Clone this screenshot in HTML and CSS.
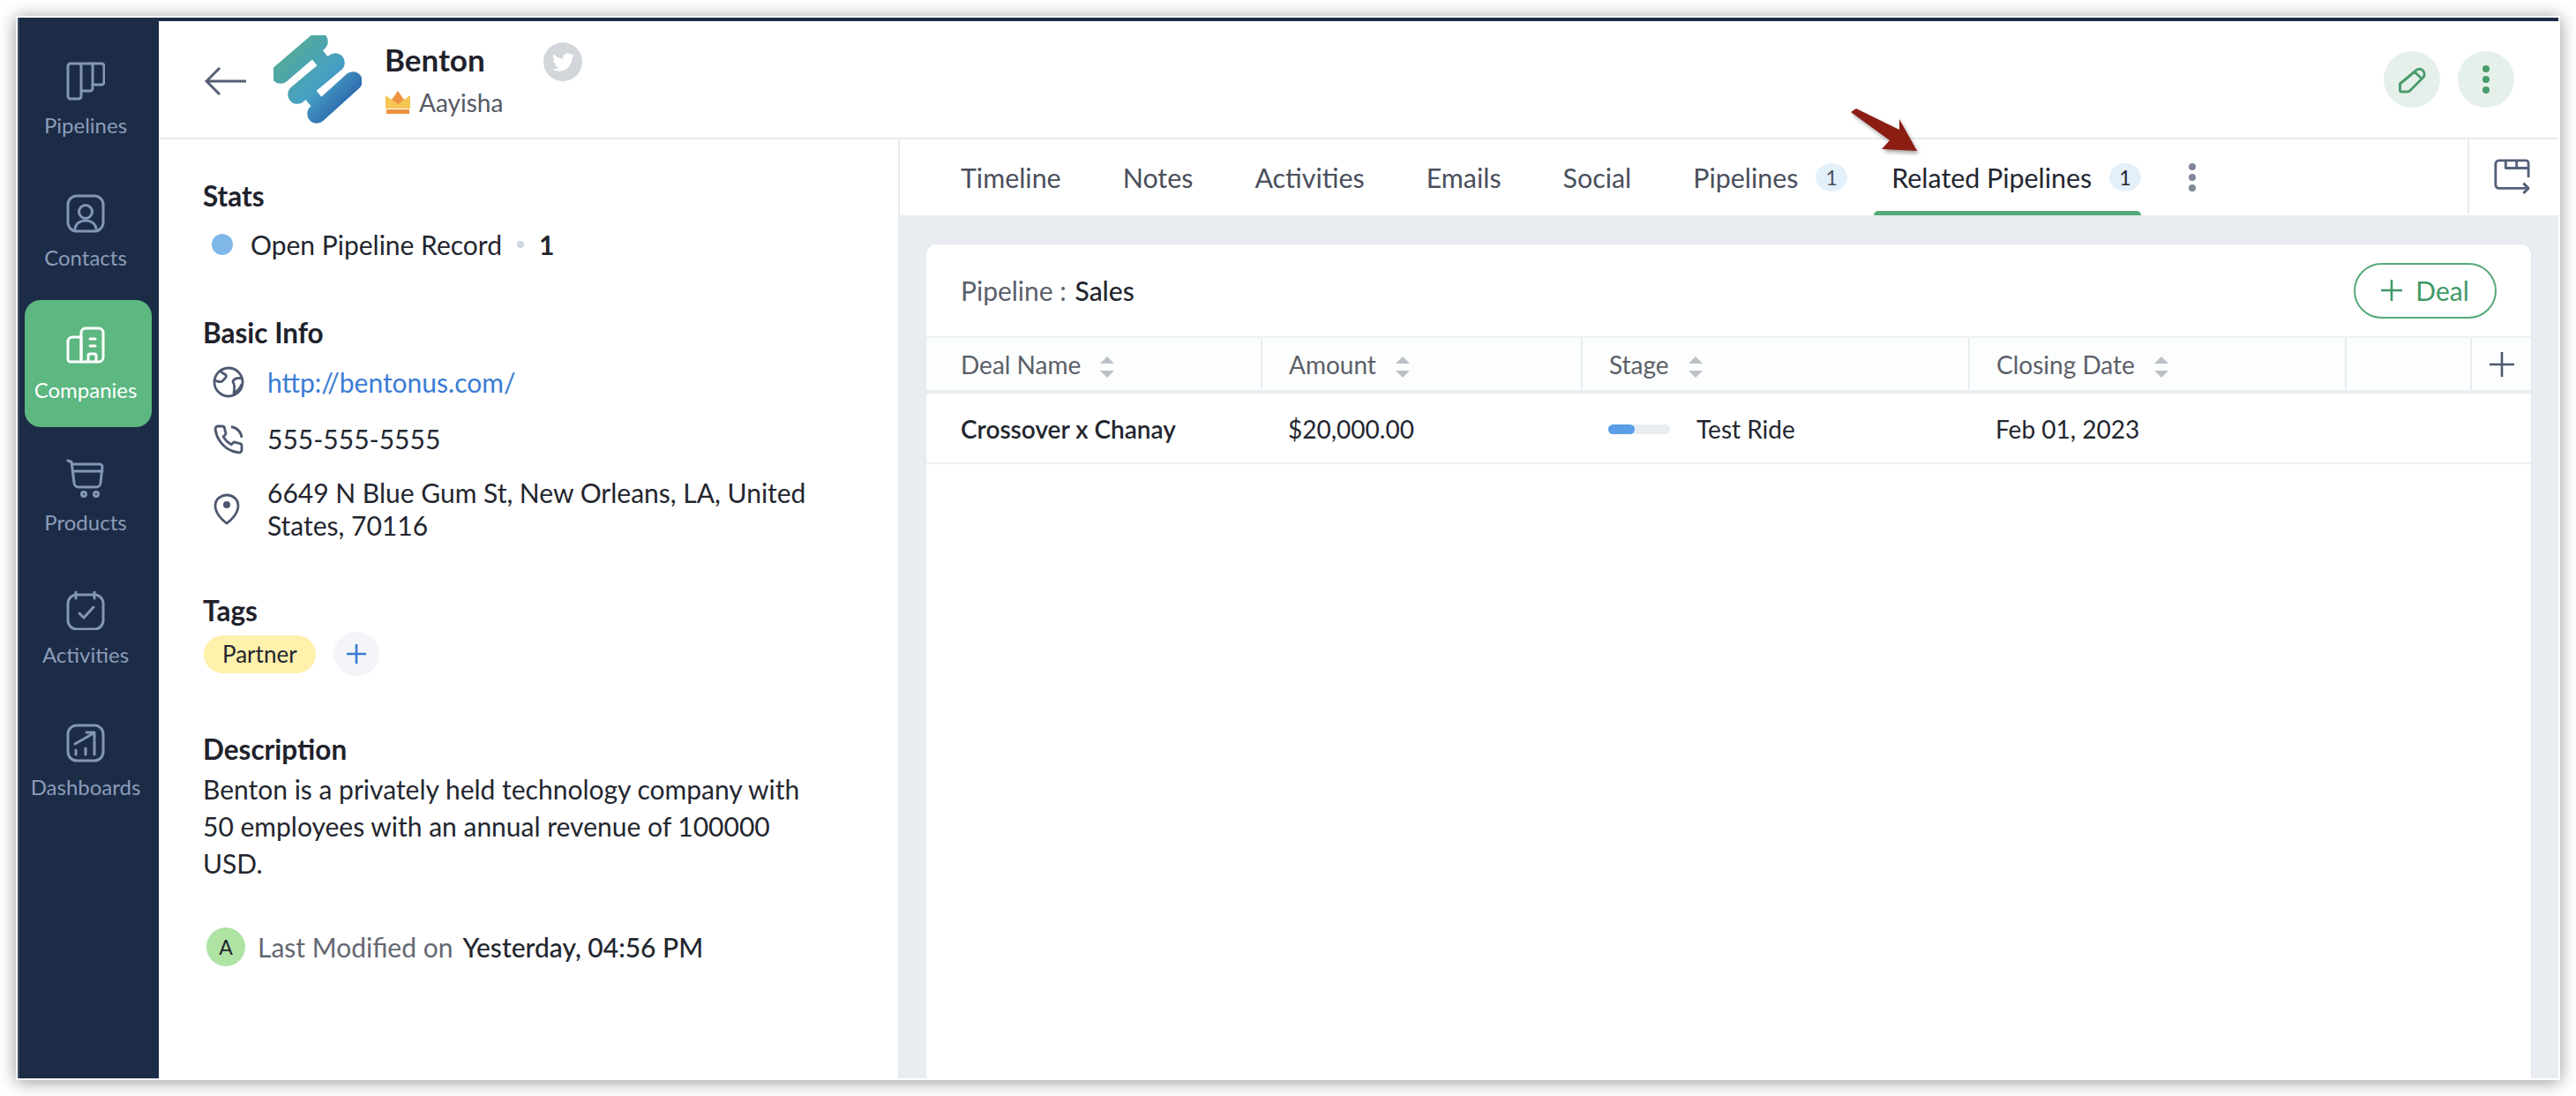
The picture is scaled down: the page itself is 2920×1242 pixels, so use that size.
FILE: index.html
```html
<!DOCTYPE html>
<html lang="en">
<head>
    <meta charset="UTF-8">
    <title>Benton</title>
    <link rel="stylesheet" href="styles.css">
</head>
<body>
    <div class="frame">
        <nav class="sidebar">
            <a class="nav-item">
                <svg class="nav-icon" viewBox="0 0 44 44"><rect x="2" y="2" width="15" height="40" rx="3"/><path d="M17 2h13v28a3 3 0 0 1-3 3H17"/><path d="M30 2h10a3 3 0 0 1 3 3v18a3 3 0 0 1-3 3H30"/></svg>
                <span>Pipelines</span>
            </a>
            <a class="nav-item">
                <svg class="nav-icon" viewBox="0 0 44 44"><rect x="2" y="2" width="40" height="40" rx="10"/><circle cx="22" cy="20" r="7.5"/><path d="M10 39c1-6 6-9 12-9s11 3 12 9"/></svg>
                <span>Contacts</span>
            </a>
            <a class="nav-item active">
                <svg class="nav-icon" viewBox="0 0 44 44"><path d="M17 12v28H5a3 3 0 0 1-3-3V17a5 5 0 0 1 5-5z"/><path d="M17 40V7a5 5 0 0 1 5-5h15a5 5 0 0 1 5 5v28a5 5 0 0 1-5 5z"/><path d="M27 14h6M27 22h6"/><path d="M25 40v-7a2 2 0 0 1 2-2h5a2 2 0 0 1 2 2v7"/></svg>
                <span>Companies</span>
            </a>
            <a class="nav-item">
                <svg class="nav-icon" viewBox="0 0 44 44"><path d="M2 2l4 1.5L9 27a5 5 0 0 0 5 5h20a5 5 0 0 0 5-5l2-18a3 3 0 0 0-3-3H7"/><path d="M9 14h32"/><circle cx="20" cy="40" r="2.5"/><circle cx="34" cy="40" r="2.5"/></svg>
                <span>Products</span>
            </a>
            <a class="nav-item">
                <svg class="nav-icon" viewBox="0 0 44 44"><rect x="2" y="4" width="40" height="39" rx="10"/><path d="M11 0v8M32 0v8"/><path d="M15 25l5 5 11-12"/></svg>
                <span>Activities</span>
            </a>
            <a class="nav-item">
                <svg class="nav-icon" viewBox="0 0 44 44"><rect x="2" y="2" width="40" height="40" rx="10"/><path d="M10 23l21-12M23 10h9v8"/><path d="M11 30v5M22 28v7M32 20v15"/></svg>
                <span>Dashboards</span>
            </a>
        </nav>

        <div class="page">
            <header class="topbar">
                <svg class="back-icon" viewBox="0 0 48 32"><path d="M47 16H2M17 1L2 16l15 15"/></svg>
                <svg class="logo" viewBox="10 10 100 100">
                    <defs>
                        <linearGradient id="logoGrad" gradientUnits="userSpaceOnUse" x1="25" y1="30" x2="100" y2="100">
                            <stop offset="0" stop-color="#52a99b"/>
                            <stop offset="0.5" stop-color="#47a0c4"/>
                            <stop offset="1" stop-color="#2457a6"/>
                        </linearGradient>
                    </defs>
                    <g fill="none" stroke="url(#logoGrad)" stroke-linecap="round">
                        <path stroke-width="21.5" d="M61 17L18 54M80 41L37 77M100 62L59 99"/>
                        <path stroke-width="16" stroke-linecap="butt" d="M53 24l19 23M46 70l19 23"/>
                    </g>
                </svg>
                <div class="title-block">
                    <div class="company-name">Benton</div>
                    <div class="owner">
                        <svg class="crown" viewBox="0 0 28 26"><path fill="#f5c653" d="M0 5l7 5 7-6 7 6 7-5v15H0z"/><path fill="#ee9240" d="M14 0l7 10-7 5-7-5zM1 21h26v5H1z"/></svg>
                        <span>Aayisha</span>
                    </div>
                </div>
                <span class="twitter-badge">
                    <svg viewBox="0 0 24 24"><path fill="#fff" d="M23.953 4.57a10 10 0 01-2.825.775 4.958 4.958 0 002.163-2.723c-.951.555-2.005.959-3.127 1.184a4.92 4.92 0 00-8.384 4.482C7.69 8.095 4.067 6.13 1.64 3.162a4.822 4.822 0 00-.666 2.475c0 1.71.87 3.213 2.188 4.096a4.904 4.904 0 01-2.228-.616v.06a4.923 4.923 0 003.946 4.827 4.996 4.996 0 01-2.212.085 4.936 4.936 0 004.604 3.417 9.867 9.867 0 01-6.102 2.105c-.39 0-.779-.023-1.17-.067a13.995 13.995 0 007.557 2.209c9.053 0 13.998-7.496 13.998-13.985 0-.21 0-.42-.015-.63A9.935 9.935 0 0024 4.59z"/></svg>
                </span>
                <div class="top-actions">
                    <button class="round-btn">
                        <svg class="pencil" viewBox="0 0 32 32"><path d="M2.500 21v7q0 2 2 2H11q1.500 0 2.500-1L28.500 14a5.600 5.600 0 0 0-8-8z"/><path d="M19 7.500l8.500 8"/></svg>
                    </button>
                    <button class="round-btn">
                        <svg class="kebab-green" viewBox="0 0 8 32"><circle cx="4" cy="4" r="4"/><circle cx="4" cy="16" r="4"/><circle cx="4" cy="28" r="4"/></svg>
                    </button>
                </div>
            </header>

            <div class="content">
                <aside class="details">
                    <h3>Stats</h3>
                    <div class="stat-row">
                        <span class="stat-dot"></span>
                        <span>Open Pipeline Record</span>
                        <span class="sep-dot"></span>
                        <b>1</b>
                    </div>

                    <h3 class="basic-head">Basic Info</h3>
                    <div class="info-row first">
                        <svg class="info-icon" viewBox="0 0 36 36"><circle cx="18" cy="18" r="16"/><path d="M9 5c2 4 4 3 6 5 2 3-2 4-4 7-2 2-5 0-9-1"/><path d="M33 14c-5-2-10 1-10 4 2 2 2 7 1 13 4-3 8-7 9-11"/></svg>
                        <a class="link">http://bentonus.com/</a>
                    </div>
                    <div class="info-row phone">
                        <svg class="info-icon" viewBox="0 0 24 24"><path class="thin" d="M22 16.900v3a2 2 0 0 1-2.200 2 19.800 19.800 0 0 1-8.600-3 19.500 19.500 0 0 1-6-6 19.800 19.800 0 0 1-3.100-8.700A2 2 0 0 1 4.100 2h3a2 2 0 0 1 2 1.700c.1 1 .4 1.900.7 2.800a2 2 0 0 1-.4 2.100L8.100 9.900a16 16 0 0 0 6 6l1.300-1.300a2 2 0 0 1 2.100-.4c.9.3 1.800.6 2.800.7a2 2 0 0 1 1.700 2z"/><path class="thin" d="M14 2.500a9 9 0 0 1 8 8"/></svg>
                        <span>555-555-5555</span>
                    </div>
                    <div class="info-row">
                        <svg class="info-icon" viewBox="0 0 36 36"><path d="M16 2C9 2 3 7 3 14c0 8 7 16 13 20 6-4 13-12 13-20 0-7-6-12-13-12z"/><circle class="fill" cx="16" cy="13" r="4"/></svg>
                        <span class="address">6649 N Blue Gum St, New Orleans, LA, United States, 70116</span>
                    </div>

                    <h3 class="tags-head">Tags</h3>
                    <div class="tag-row">
                        <span class="tag">Partner</span>
                        <button class="tag-add"><svg viewBox="0 0 24 24"><path d="M12 1v22M1 12h22"/></svg></button>
                    </div>

                    <h3 class="desc-head">Description</h3>
                    <p class="description">Benton is a privately held technology company with 50 employees with an annual revenue of 100000 USD.</p>

                    <div class="modified">
                        <span class="avatar">A</span>
                        <span class="modified-label">Last Modified on</span>
                        <span class="modified-value">Yesterday, 04:56 PM</span>
                    </div>
                </aside>

                <main class="main">
                    <div class="tabs">
                        <a class="tab">Timeline</a>
                        <a class="tab">Notes</a>
                        <a class="tab">Activities</a>
                        <a class="tab">Emails</a>
                        <a class="tab">Social</a>
                        <a class="tab counted">Pipelines <span class="count">1</span></a>
                        <a class="tab counted active">Related Pipelines <span class="count">1</span></a>
                        <svg class="kebab" viewBox="0 0 8 32"><circle cx="4" cy="4" r="4"/><circle cx="4" cy="16" r="4"/><circle cx="4" cy="28" r="4"/></svg>
                        <div class="tab-tool">
                            <svg viewBox="0 0 44 44"><path d="M42 23V6a3 3 0 0 0-3-3H7a4 4 0 0 0-4 4v25a4 4 0 0 0 4 4h34"/><path d="M15 3v9h27M28 3v9"/><path d="M36 30l6 6-6 6"/></svg>
                        </div>
                    </div>

                    <div class="panel">
                        <div class="card">
                            <div class="card-head">
                                <div class="pipeline-name">Pipeline : <b>Sales</b></div>
                                <button class="add-deal"><svg viewBox="0 0 24 24"><path d="M12 0v24M0 12h24"/></svg>Deal</button>
                            </div>
                            <div class="grid grid-head">
                                <div class="th">Deal Name <svg class="sort" viewBox="0 0 16 24"><path d="M8 0l8 8H0zM0 16h16l-8 8z"/></svg></div>
                                <div class="th">Amount <svg class="sort" viewBox="0 0 16 24"><path d="M8 0l8 8H0zM0 16h16l-8 8z"/></svg></div>
                                <div class="th">Stage <svg class="sort" viewBox="0 0 16 24"><path d="M8 0l8 8H0zM0 16h16l-8 8z"/></svg></div>
                                <div class="th">Closing Date <svg class="sort" viewBox="0 0 16 24"><path d="M8 0l8 8H0zM0 16h16l-8 8z"/></svg></div>
                                <div class="th"></div>
                                <div class="th th-add"><svg viewBox="0 0 28 28"><path d="M14 0v28M0 14h28"/></svg></div>
                            </div>
                            <div class="grid grid-row">
                                <div class="td deal-name">Crossover x Chanay</div>
                                <div class="td">$20,000.00</div>
                                <div class="td stage">
                                    <span class="stage-bar"><span class="stage-fill"></span></span>
                                    Test Ride
                                </div>
                                <div class="td">Feb 01, 2023</div>
                            </div>
                        </div>
                    </div>
                </main>
            </div>
        </div>

        <!-- red pointer drawn over the tab bar -->
        <svg class="pointer" viewBox="0 0 100 70"><path d="M8 9l6-4 49 24V17l20 36-40-2 9-10z"/></svg>
    </div>
</body>
</html>
```

FILE: styles.css
```css
* {
    box-sizing: border-box;
}
html, body {
    margin: 0;
    height: 100%;
    background-color: #ffffff;
}
body {
    padding: 18px;
    font-family: "Lato", "Liberation Sans", sans-serif;
    font-size: 30px;
    color: #23262f;
    overflow: hidden;
}
button {
    font-family: inherit;
    border: none;
    padding: 0;
    cursor: pointer;
}
.frame {
    position: relative;
    display: flex;
    width: 2884px;
    height: 1206px;
    border: 2px solid #ffffff;
    background-color: #ffffff;
    box-shadow: 0 2px 18px rgba(0, 0, 0, 0.42);
}

/* left navigation */
.sidebar {
    flex: 0 0 160px;
    display: flex;
    flex-direction: column;
    gap: 6px;
    padding: 20px 8px 0 8px;
    background-color: #1c2c47;
    border-left: 2px solid #3c4a64;
}
.nav-item {
    display: flex;
    flex-direction: column;
    align-items: center;
    height: 144px;
    padding: 30px 6px 0 0;
    margin-left: -2px;
    border-radius: 18px;
    font-size: 24px;
    line-height: 30px;
    color: #8c9cb9;
}
.nav-icon {
    width: 44px;
    height: 44px;
    margin-bottom: 13px;
    fill: none;
    stroke: #8496b6;
    stroke-width: 3;
    stroke-linecap: round;
    stroke-linejoin: round;
}
.nav-item.active {
    background-color: #5cb781;
    color: #ffffff;
}
.nav-item.active .nav-icon {
    stroke: #ffffff;
}

.page {
    flex: 1;
    min-width: 0;
    display: flex;
    flex-direction: column;
    border-top: 4px solid #1c2c47;
}

/* record header */
.topbar {
    flex: 0 0 134px;
    display: flex;
    align-items: center;
    padding-left: 52px;
    border-bottom: 2px solid #e7ebf0;
}
.back-icon {
    width: 48px;
    height: 32px;
    margin-top: 4px;
    fill: none;
    stroke: #555f75;
    stroke-width: 3;
}
.logo {
    width: 100px;
    height: 100px;
    margin-left: 30px;
}
.title-block {
    margin-left: 26px;
}
.company-name {
    font-size: 35px;
    font-weight: 700;
    line-height: 42px;
    margin-top: -2px;
    color: #1f222b;
}
.owner {
    display: flex;
    align-items: center;
    margin-top: 11px;
    margin-left: 1px;
    font-size: 28px;
    line-height: 34px;
    color: #555964;
}
.crown {
    width: 28px;
    height: 26px;
    margin-right: 10px;
}
.twitter-badge {
    align-self: flex-start;
    display: flex;
    align-items: center;
    justify-content: center;
    width: 44px;
    height: 44px;
    margin-top: 24px;
    margin-left: 46px;
    border-radius: 50%;
    background-color: #d2d6da;
}
.twitter-badge svg {
    width: 25px;
    height: 25px;
}
.top-actions {
    display: flex;
    gap: 20px;
    margin-left: auto;
    margin-right: 50px;
}
.round-btn {
    display: flex;
    align-items: center;
    justify-content: center;
    width: 64px;
    height: 64px;
    border-radius: 50%;
    background-color: #e6f0eb;
}
.pencil {
    width: 32px;
    height: 32px;
    fill: none;
    stroke: #4a9c6d;
    stroke-width: 3;
    stroke-linejoin: round;
}
.kebab-green {
    width: 8px;
    height: 32px;
    fill: #4a9e6c;
}

.content {
    flex: 1;
    display: flex;
    min-height: 0;
}

/* details column */
.details {
    flex: 0 0 838px;
    padding: 44px 0 0 50px;
}
h3 {
    margin: 0;
    font-size: 31.5px;
    font-weight: 700;
    line-height: 40px;
    color: #1f222b;
}
.stat-row {
    display: flex;
    align-items: center;
    margin-top: 15px;
    line-height: 40px;
}
.stat-dot {
    width: 24px;
    height: 24px;
    margin-left: 10px;
    margin-right: 20px;
    border-radius: 50%;
    background-color: #7fb7e8;
}
.sep-dot {
    width: 8px;
    height: 8px;
    margin: 0 17px 0 17px;
    border-radius: 50%;
    background-color: #cfd6df;
}
.stat-row b {
    font-weight: 700;
}
.basic-head {
    margin-top: 60px;
}
.info-row {
    display: flex;
    align-items: center;
    margin-top: 24px;
    padding-left: 11px;
    line-height: 37px;
}
.info-row.first {
    margin-top: 16px;
    min-height: 40px;
}
.info-row.phone {
    margin-top: 26px;
}
.info-icon {
    flex: 0 0 36px;
    width: 36px;
    height: 36px;
    margin-right: 26px;
    fill: none;
    stroke: #4d5870;
    stroke-width: 2.800;
    stroke-linejoin: round;
}
.info-icon .thin {
    stroke-width: 1.900;
}
.info-icon .fill {
    fill: #4d5870;
    stroke: none;
}
.link {
    color: #3a7bd5;
}
.address {
    width: 620px;
}
.tags-head {
    margin-top: 58px;
}
.tag-row {
    display: flex;
    align-items: center;
    gap: 20px;
    margin-top: 4px;
    margin-left: 1px;
}
.tag {
    display: flex;
    align-items: center;
    height: 43px;
    padding: 0 21px;
    border-radius: 22px;
    background-color: #fff0ab;
    font-size: 26px;
}
.tag-add {
    display: flex;
    align-items: center;
    justify-content: center;
    width: 52px;
    height: 50px;
    border-radius: 50%;
    background-color: #f3f5f9;
}
.tag-add svg {
    width: 24px;
    height: 24px;
    fill: none;
    stroke: #3a7bd5;
    stroke-width: 2.600;
}
.desc-head {
    margin-top: 63px;
}
.description {
    width: 700px;
    margin: 4px 0 0 0;
    line-height: 42px;
}
.modified {
    display: flex;
    align-items: center;
    margin-top: 52px;
}
.avatar {
    display: flex;
    align-items: center;
    justify-content: center;
    width: 44px;
    height: 44px;
    margin-left: 4px;
    margin-right: 14px;
    border-radius: 50%;
    background-color: #aee3a4;
    font-size: 23px;
}
.modified-label {
    color: #636773;
    margin-right: 11px;
}
.modified-value {
    font-weight: 500;
}

/* related list */
.main {
    flex: 1;
    min-width: 0;
    display: flex;
    flex-direction: column;
    border-left: 2px solid #e7ebf0;
}
.tabs {
    flex: 0 0 86px;
    display: flex;
    align-items: stretch;
    gap: 30px;
    padding-left: 49px;
}
.tab {
    position: relative;
    display: flex;
    align-items: center;
    padding: 0 20px;
    font-size: 30.4px;
    color: #4a4f5c;
    white-space: pre;
}
.tab.counted {
    padding-right: 0;
}
.tab.active {
    color: #23262f;
}
.tab.active::after {
    content: "";
    position: absolute;
    left: 0;
    right: 0;
    bottom: 0;
    height: 5px;
    border-radius: 5px 5px 0 0;
    background-color: #56ab78;
}
.count {
    display: flex;
    align-items: center;
    justify-content: center;
    width: 36px;
    height: 32px;
    margin-left: 12px;
    border-radius: 50%;
    background-color: #e3f0fa;
    font-size: 23px;
}
.kebab {
    align-self: center;
    width: 8px;
    height: 32px;
    margin-left: 24px;
    fill: #7f8798;
}
.tab-tool {
    display: flex;
    align-items: center;
    justify-content: center;
    width: 103px;
    margin: 0 0 2px auto;
    border-left: 2px solid #e7ebf0;
}
.tab-tool svg {
    width: 42px;
    height: 42px;
    margin-left: -6px;
    fill: none;
    stroke: #55617a;
    stroke-width: 3;
    stroke-linejoin: round;
}
.panel {
    flex: 1;
    min-height: 0;
    padding: 32px 30px 0 29px;
    background-color: #e9edf2;
}
.card {
    height: 100%;
    border: 1px solid #e3e7ec;
    border-bottom: none;
    border-radius: 12px 12px 0 0;
    background-color: #ffffff;
}
.card-head {
    display: flex;
    align-items: center;
    justify-content: space-between;
    height: 104px;
    padding: 0 39px;
}
.pipeline-name {
    color: #5a5f6b;
    font-size: 30px;
}
.pipeline-name b {
    margin-left: 2px;
    color: #23262f;
    font-weight: 500;
}
.add-deal {
    display: flex;
    align-items: center;
    justify-content: center;
    gap: 15px;
    width: 162px;
    height: 63px;
    border: 2px solid #57a878;
    border-radius: 32px;
    background-color: #ffffff;
    color: #3f9a66;
    font-size: 30px;
}
.add-deal svg {
    width: 24px;
    height: 24px;
    fill: none;
    stroke: #3f9a66;
    stroke-width: 2.600;
}
.grid {
    display: grid;
    grid-template-columns: 381px 363px 439px 427px 142px 1fr;
}
.grid-head {
    height: 65px;
    border-top: 2px solid #eef1f4;
    border-bottom: 4px solid #e9edf2;
    background-color: #fcfdfd;
}
.th {
    display: flex;
    align-items: center;
    padding-left: 30px;
    border-right: 2px solid #e9edf2;
    font-size: 28px;
    color: #5b6069;
    white-space: pre;
}
.th:first-child, .td:first-child {
    padding-left: 39px;
}
.th:last-child {
    border-right: none;
}
.sort {
    width: 16px;
    height: 24px;
    margin-left: 15px;
    margin-top: 6px;
    fill: #bcc0c6;
}
.th-add {
    justify-content: center;
    padding-left: 0;
}
.th-add svg {
    width: 28px;
    height: 28px;
    margin-left: 0;
    fill: none;
    stroke: #4d5870;
    stroke-width: 2.600;
}
.grid-row {
    height: 80px;
    border-bottom: 2px solid #eef1f4;
}
.td {
    display: flex;
    align-items: center;
    padding: 2px 0 0 29px;
    font-size: 28px;
}
.deal-name {
    font-weight: 600;
}
.stage-bar {
    width: 70px;
    height: 11px;
    margin-right: 30px;
    border-radius: 6px;
    background-color: #e9edf2;
}
.stage-fill {
    display: block;
    width: 30px;
    height: 100%;
    border-radius: 6px;
    background-color: #5a9fe6;
}
.pointer {
    position: absolute;
    left: 2070px;
    top: 98px;
    width: 100px;
    height: 70px;
    fill: #8b1d12;
    filter: drop-shadow(2px 3px 2px rgba(0, 0, 0, 0.35));
}
```
